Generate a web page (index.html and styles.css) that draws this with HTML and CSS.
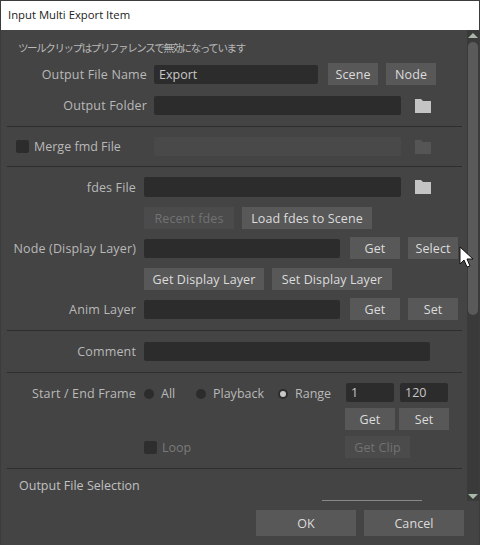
FILE: index.html
```html
<!DOCTYPE html>
<html>
<head>
  <title>Input Multi Export Item</title>
  <link rel="stylesheet" href="styles.css">
</head>
<body>
  <div class="dialog">
    <div class="titlebar">Input Multi Export Item</div>
    <div class="main">
      <div class="content">
        <p class="notice">ツールクリップはプリファレンスで無効になっています</p>

        <div class="row row-file">
          <label class="lbl lbl-wide">Output File Name</label>
          <input class="field w-164" type="text" value="Export">
          <button class="btn w-50 ml-10">Scene</button>
          <button class="btn w-50 ml-8">Node</button>
        </div>
        <div class="row row-folder">
          <label class="lbl lbl-wide">Output Folder</label>
          <input class="field w-247" type="text">
          <svg class="folder" viewBox="0 0 16 14"><path d="M0 0h6l2 2h8v12H0z"/></svg>
        </div>
        <hr class="line line-a">

        <div class="row row-merge">
          <span class="check"></span>
          <span class="check-text">Merge fmd File</span>
          <input class="field field-off w-247" type="text" disabled>
          <svg class="folder folder-off" viewBox="0 0 16 14"><path d="M0 0h6l2 2h8v12H0z"/></svg>
        </div>
        <hr class="line line-b">

        <div class="row row-fdes">
          <label class="lbl">fdes File</label>
          <input class="field w-257" type="text">
          <svg class="folder" viewBox="0 0 16 14"><path d="M0 0h6l2 2h8v12H0z"/></svg>
        </div>
        <div class="row row-btns row-recent indent">
          <button class="btn btn-off w-90">Recent fdes</button>
          <button class="btn w-130 ml-8">Load fdes to Scene</button>
        </div>
        <div class="row row-btns">
          <label class="lbl">Node (Display Layer)</label>
          <input class="field w-196" type="text">
          <button class="btn w-50 ml-10">Get</button>
          <button class="btn w-50 ml-8">Select</button>
        </div>
        <div class="row row-btns row-layer indent">
          <button class="btn w-120">Get Display Layer</button>
          <button class="btn w-120 ml-8">Set Display Layer</button>
        </div>
        <div class="row row-btns">
          <label class="lbl">Anim Layer</label>
          <input class="field w-196" type="text">
          <button class="btn w-50 ml-10">Get</button>
          <button class="btn w-50 ml-8">Set</button>
        </div>
        <hr class="line line-c">

        <div class="row row-comment">
          <label class="lbl">Comment</label>
          <input class="field w-286" type="text">
        </div>
        <hr class="line line-d">

        <div class="frame">
          <label class="lbl">Start / End Frame</label>
          <div class="radios">
            <span class="radio"></span><span class="radio-text w-all">All</span>
            <span class="radio"></span><span class="radio-text w-play">Playback</span>
            <span class="radio radio-on"></span><span class="radio-text">Range</span>
          </div>
          <div class="frame-side">
            <div class="frame-inputs">
              <input class="field field-num" type="text" value="1">
              <input class="field field-num" type="text" value="120">
            </div>
            <div class="frame-btns">
              <button class="btn w-50">Get</button>
              <button class="btn w-50">Set</button>
            </div>
          </div>
        </div>
        <div class="row row-loop">
          <span class="check check-loop"></span>
          <span class="loop-text">Loop</span>
          <button class="btn btn-off w-65">Get Clip</button>
        </div>
        <hr class="line line-e">

        <p class="section">Output File Selection</p>
        <div class="stub"></div>
      </div>

      <div class="scrollbar">
        <span class="arrow arrow-up"></span>
        <div class="track"><div class="thumb"></div></div>
        <span class="arrow arrow-down"></span>
      </div>
    </div>

    <div class="footer">
      <button class="btn btn-big">OK</button>
      <button class="btn btn-big">Cancel</button>
    </div>

    <svg class="cursor" viewBox="0 0 14 22"><path d="M1 1v17l4-4 3 7 3-1-3-7h6z"/></svg>
  </div>
</body>
</html>
```

FILE: styles.css
```css
* {
  box-sizing: border-box;
}
html, body {
  margin: 0;
  padding: 0;
}
body {
  width: 480px;
  height: 545px;
  overflow: hidden;
  font-family: "Open Sans", "Noto Sans CJK JP", sans-serif;
  font-size: 12.5px;
  color: #b9b9b9;
  background: #444;
}
.dialog {
  position: relative;
  width: 480px;
  height: 545px;
  display: flex;
  flex-direction: column;
  border: 1px solid #3c3c3c;
  border-bottom: 0;
  background: #444;
}
.titlebar {
  flex: none;
  height: 29px;
  padding: 0 7px;
  line-height: 28px;
  font-size: 11.3px;
  background: #fff;
  color: #222;
}
.main {
  flex: none;
  height: 471px;
  display: flex;
}
.content {
  width: 466px;
  overflow: hidden;
}
.notice {
  margin: 0;
  padding: 10px 0 0 17px;
  height: 27px;
  line-height: 17px;
  font-size: 10.5px;
  letter-spacing: -1.4px;
  color: #b9b9b9;
}
.section {
  margin: 0;
  padding: 8px 0 0 18px;
  height: 31px;
  line-height: 17px;
  color: #c0c0c0;
}
.row {
  display: flex;
  align-items: center;
}
.indent {
  padding-left: 143px;
}
.lbl {
  flex: none;
  width: 135px;
  margin-right: 8px;
  text-align: right;
  letter-spacing: 0.15px;
}
.lbl-wide {
  width: 146px;
  margin-right: 7px;
}
.row-file {
  height: 22px;
  margin-top: 6px;
}
.row-folder {
  height: 19px;
  margin-top: 11px;
}
.row-merge {
  height: 19px;
  padding-left: 15px;
  margin-top: 10px;
}
.row-fdes {
  height: 20px;
  margin-top: 10px;
}
.row-btns {
  height: 22px;
  margin-top: 8px;
}
.row-recent {
  margin-top: 10px;
}
.row-layer {
  margin-top: 9px;
}
.row-comment {
  height: 19px;
  margin-top: 11px;
}
.row-loop {
  height: 22px;
  margin-top: 6px;
  padding-left: 143px;
}
.field {
  flex: none;
  height: 19px;
  padding: 0 5px;
  border: 0;
  border-radius: 2px;
  background: #2c2c2c;
  color: #c8c8c8;
  font: inherit;
}
.row-fdes .field {
  height: 20px;
}
.field-off {
  background: #494949;
}
.field-num {
  width: 48px;
}
.btn {
  flex: none;
  height: 22px;
  padding: 0;
  border: 0;
  background: #585858;
  color: #dcdcdc;
  font: inherit;
  letter-spacing: 0.1px;
}
.btn-off {
  background: #4b4b4b;
  color: #727272;
}
.btn-big {
  width: 100px;
  height: 26px;
}
.w-50 { width: 50px; }
.w-65 { width: 65px; }
.w-90 { width: 90px; }
.w-120 { width: 120px; }
.w-130 { width: 130px; }
.w-164 { width: 164px; }
.w-196 { width: 196px; }
.w-247 { width: 247px; }
.w-257 { width: 257px; }
.w-286 { width: 286px; }
.ml-8 { margin-left: 8px; }
.ml-10 { margin-left: 10px; }
.folder {
  flex: none;
  width: 16px;
  height: 14px;
  margin-left: 14px;
  fill: #c4c4c4;
}
.folder-off {
  fill: #555;
}
.line {
  height: 1px;
  margin: 0 0 0 6px;
  width: 455px;
  border: 0;
  background: #2e2e2e;
}
.line-a { margin-top: 11px; }
.line-b { margin-top: 10px; }
.line-c { margin-top: 10px; }
.line-d { margin-top: 11px; }
.line-e { margin-top: 10px; }
.check {
  flex: none;
  width: 13px;
  height: 13px;
  margin-right: 5px;
  border-radius: 2px;
  background: #2c2c2c;
}
.check-text {
  flex: none;
  width: 120px;
}
.check-loop {
  background: #2e2e2e;
}
.loop-text {
  flex: none;
  width: 183px;
  color: #7a7a7a;
}
.frame {
  display: flex;
  margin-top: 10px;
}
.frame .lbl {
  line-height: 21px;
}
.radios {
  flex: none;
  width: 201px;
  height: 21px;
  display: flex;
  align-items: center;
}
.radio {
  flex: none;
  width: 10px;
  height: 10px;
  margin-right: 7px;
  border-radius: 50%;
  background: #2c2c2c;
}
.radio-on {
  position: relative;
}
.radio-on::after {
  content: "";
  position: absolute;
  left: 2px;
  top: 2px;
  width: 6px;
  height: 6px;
  border-radius: 50%;
  background: #c8c8c8;
}
.radio-text {
  flex: none;
}
.w-all { width: 35px; }
.w-play { width: 65px; }
.frame-side {
  flex: none;
  width: 105px;
}
.frame-inputs {
  display: flex;
  gap: 6px;
  padding-left: 1px;
}
.frame-btns {
  display: flex;
  gap: 4px;
  margin-top: 6px;
}
.stub {
  width: 100px;
  height: 1px;
  margin: 0 0 0 321px;
  background: #888;
}
.scrollbar {
  width: 12px;
  display: flex;
  flex-direction: column;
  background: #3a3a3a;
}
.arrow {
  flex: none;
  display: block;
  width: 0;
  height: 0;
  margin: 3px 1px 2px 1px;
  border-left: 5px solid transparent;
  border-right: 5px solid transparent;
}
.arrow-up {
  border-bottom: 5px solid #a9b8a9;
}
.arrow-down {
  border-top: 5px solid #a9b8a9;
}
.track {
  flex: 1;
  padding: 2px 1px 0 1px;
}
.thumb {
  width: 10px;
  height: 273px;
  border-radius: 5px;
  background: #5a5a5a;
}
.footer {
  flex: 1;
  display: flex;
  gap: 8px;
  justify-content: flex-end;
  padding: 9px 15px 0 0;
}
.cursor {
  position: absolute;
  left: 458px;
  top: 245px;
  width: 14px;
  height: 22px;
  fill: #fff;
  stroke: #111;
  stroke-width: 1;
}
```
